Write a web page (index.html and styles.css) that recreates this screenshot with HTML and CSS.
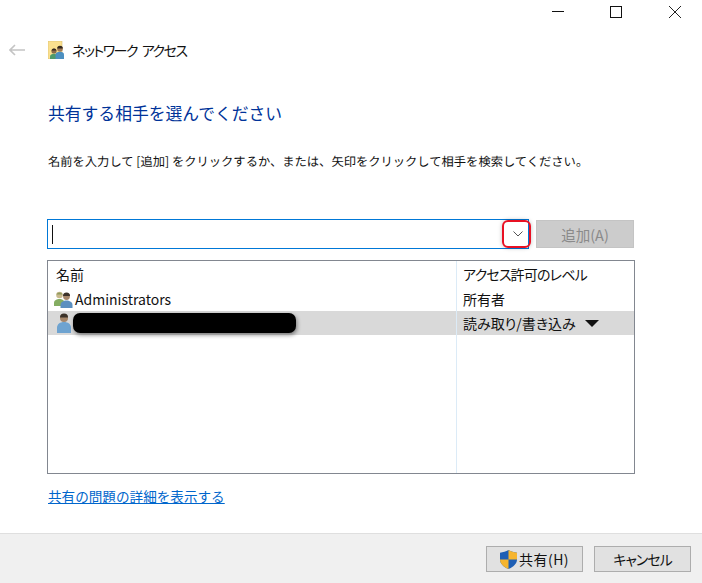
FILE: index.html
```html
<!DOCTYPE html>
<html lang="ja">
<head>
<meta charset="utf-8">
<title>ネットワーク アクセス</title>
<link rel="stylesheet" href="styles.css">
</head>
<body>
<div class="window">
  <div class="titlebar">
    <svg class="cap" width="58" height="22" viewBox="0 0 58 22"><path d="M0 11.500H12" stroke="#111" fill="none"/></svg>
    <svg class="cap" width="59" height="22" viewBox="0 0 59 22"><rect x="0.500" y="6.500" width="11" height="11" stroke="#111" fill="none"/></svg>
    <svg class="cap" width="12" height="22" viewBox="0 0 12 22"><path d="M0 6L12 18M12 6L0 18" stroke="#222" fill="none"/></svg>
  </div>
  <div class="nav">
    <svg class="back" width="16" height="12" viewBox="0 0 16 12"><path d="M6 1L1 6L6 11M1 6H16" stroke="#c4c4c4" stroke-width="1.600" fill="none"/></svg>
    <svg class="navicon" width="16" height="18" viewBox="0 0 16 18">
      <rect x="0" y="0" width="14" height="18" fill="#fbe08f" stroke="#d8bd6c" stroke-width="0.600"/>
      <circle cx="6" cy="10" r="2.600" fill="#8a6a4a"/><path d="M3.500 9.500a2.600 2.600 0 0 1 5 0z" fill="#33281e"/><path d="M2 18v-2.500c0-2 2-2.800 4-2.800s3 .8 3 2.800V18z" fill="#4f9a6a"/>
      <circle cx="12" cy="8" r="2.800" fill="#a07a58"/><path d="M9.200 7.500a2.800 2.800 0 0 1 5.600 0z" fill="#33281e"/><path d="M7.500 18v-4.500c0-2 2-2.800 4.500-2.800s4 .8 4 2.800V18z" fill="#4c8fc0"/>
    </svg>
    <span class="navtitle">ネットワーク アクセス</span>
  </div>
  <h1 class="heading">共有する相手を選んでください</h1>
  <p class="hint">名前を入力して [追加] をクリックするか、または、矢印をクリックして相手を検索してください。</p>
  <div class="addrow">
    <div class="combo">
      <span class="caret"></span>
      <svg class="chev" width="10" height="6" viewBox="0 0 10 6"><path d="M0.500 0.500L5 5L9.500 0.500" stroke="#555" fill="none"/></svg>
      <span class="redmark"></span>
    </div>
    <button class="addbtn" type="button">追加(A)</button>
  </div>
  <div class="list">
    <div class="row head"><div class="c1 pad">名前</div><div class="c2 access">アクセス許可のレベル</div></div>
    <div class="row">
      <div class="c1">
        <svg class="usr" width="20" height="17" viewBox="0 0 20 17">
          <circle cx="5.500" cy="4" r="3.300" fill="#c8b98c"/><path d="M2.500 3.500a3.200 3.200 0 0 1 6 0z" fill="#8f9a5e"/><path d="M0 15v-3c0-3 3-4 5.500-4s5 1 5 4v3z" fill="#84ad62"/>
          <circle cx="12.500" cy="5.500" r="3.400" fill="#a5866a"/><path d="M9 5a3.500 3.500 0 0 1 7 0z" fill="#3b322a"/><path d="M6.500 17v-3c0-3 3-4.500 6-4.500s6 1.500 6 4.500v3z" fill="#5b8fc0"/>
        </svg>Administrators
      </div>
      <div class="c2">所有者</div>
    </div>
    <div class="row sel">
      <div class="c1">
        <svg class="usr one" width="16" height="20" viewBox="0 0 16 20">
          <circle cx="8" cy="5" r="4" fill="#a5866a"/><path d="M4 4.500a4 4 0 0 1 8 0z" fill="#3b322a"/><path d="M1 20v-5c0-4 3-6 7-6s7 2 7 6v5z" fill="#6ea3d0"/>
        </svg><span class="redact"></span>
      </div>
      <div class="c2 prop">読み取り/書き込み<span class="tri"></span></div>
    </div>
    <div class="row fill"><div class="c1"></div><div class="c2"></div></div>
  </div>
  <a class="link" href="#">共有の問題の詳細を表示する</a>
  <div class="spacer"></div>
  <div class="footer">
    <button class="btn btn-share" type="button">
      <svg class="shield" width="17" height="19" viewBox="0 0 14 18" preserveAspectRatio="none">
        <path d="M7 0C5 1.500 2.500 2.300 0 2.500V9c0 4 3 7 7 9 4-2 7-5 7-9V2.500C11.500 2.300 9 1.500 7 0z" fill="#1f5fb4"/>
        <path d="M7 0C9 1.500 11.500 2.300 14 2.500V9H7zM7 9H0c0 4 3 7 7 9z" fill="#f6b52e"/>
      </svg>共有(H)</button>
    <button class="btn btn-cancel" type="button">キャンセル</button>
  </div>
</div>
</body>
</html>
```
FILE: styles.css
```css
* { box-sizing: border-box; }
html, body { margin: 0; padding: 0; }
body { background: #fff; font-family: "Noto Sans CJK JP", "Noto Sans", sans-serif; color: #111; }
.window { width: 702px; height: 583px; display: flex; flex-direction: column; overflow: hidden; }
.titlebar { height: 23px; display: flex; justify-content: flex-end; padding-right: 21px; flex: none; }
.cap { display: block; flex: none; }
.nav { height: 40px; margin-top: 7px; display: flex; align-items: center; padding-left: 9px; flex: none; }
.back { margin-right: 23px; }
.navicon { margin-right: 8px; }
.navtitle { font-size: 14px; line-height: 20px; font-feature-settings: "palt"; letter-spacing: -1.500px; word-spacing: 3px; }
.prop { font-feature-settings: "palt"; }
.access { font-feature-settings: "palt"; letter-spacing: -0.800px; }
.heading { margin: 31px 0 0; padding: 0 0 0 48px; height: 24px; font-size: 16.800px; line-height: 24px; font-weight: 400; color: #003399; flex: none; }
.hint { margin: 26px 0 0; padding-left: 48px; font-size: 12.290px; line-height: 20px; height: 20px; white-space: nowrap; flex: none; text-rendering: geometricPrecision; }
.addrow { display: flex; gap: 7px; margin: 48px 0 0 47px; height: 30px; flex: none; }
.combo { position: relative; width: 482px; height: 30px; border: 1px solid #0078d7; display: flex; align-items: center; justify-content: space-between; padding: 0 5px 0 4px; }
.caret { width: 1px; height: 19px; background: #111; }
.chev { display: block; }
.redmark { position: absolute; right: -3px; top: 0; width: 29px; height: 28px; border: 2px solid #e81123; border-radius: 6px; box-shadow: 0 0 4px rgba(0,0,0,.25); }
.addbtn { width: 98px; height: 28px; margin-top: 1px; background: #ccc; border: 1px solid #c4c4c4; color: #8a8a8a; font: 14.500px "Noto Sans CJK JP", sans-serif; padding: 0; }
.list { margin: 11px 0 0 47px; width: 588px; height: 214px; border: 1px solid #828790; display: flex; flex-direction: column; flex: none; }
.row { display: flex; height: 24px; flex: none; font-size: 14px; line-height: 24px; }
.head { height: 26px; line-height: 28px; }
.c1 { width: 408px; display: flex; align-items: center; white-space: nowrap; flex: none; padding-left: 6px; }
.c1.pad { padding-left: 8px; }
.c2 { flex: 1; border-left: 1px solid #dcebf7; padding-left: 6px; white-space: nowrap; display: flex; align-items: center; }
.sel { background: #d9d9d9; }
.fill { flex: 1; height: auto; }
.usr { margin-right: 1px; flex: none; }
.usr.one { margin: 0 1px 0 2px; }
.redact { width: 223px; height: 20px; background: #000; border-radius: 7px; box-shadow: 1px 2px 4px rgba(0,0,0,.45); }
.tri { width: 0; height: 0; border-left: 7px solid transparent; border-right: 7px solid transparent; border-top: 7px solid #111; margin-left: 9px; }
.link { margin: 13px 0 0 48px; font-size: 13.600px; line-height: 18px; height: 18px; color: #0066cc; text-decoration: underline; align-self: flex-start; flex: none; }
.spacer { flex: 1; }
.footer { height: 50px; flex: none; background: #f0f0f0; border-top: 1px solid #dfdfdf; display: flex; justify-content: flex-end; gap: 11px; padding: 12px 11px 0 0; }
.btn { width: 97px; height: 26px; background: #e1e1e1; border: 1px solid #adadad; font: 14px "Noto Sans CJK JP", sans-serif; color: #111; padding: 0; display: flex; align-items: center; justify-content: center; }
.btn-share { letter-spacing: 0.500px; }
.btn-cancel { font-feature-settings: "palt"; letter-spacing: -1px; }
.shield { margin-right: 2px; }
```
